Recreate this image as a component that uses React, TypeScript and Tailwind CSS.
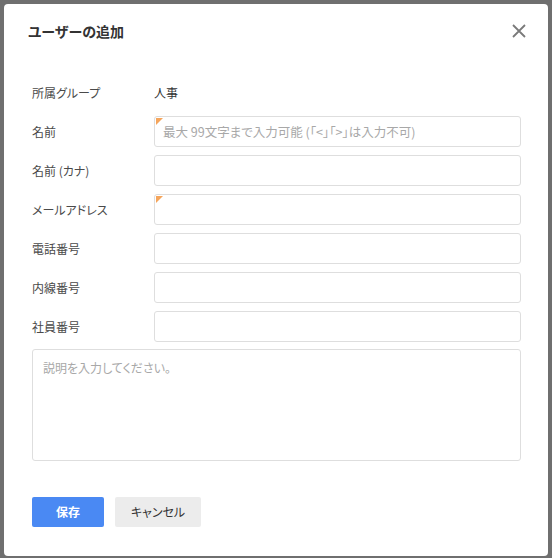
import React from "react";

const jp = "font-['Noto_Sans_CJK_JP','Noto_Sans',sans-serif] [font-feature-settings:'palt']";

function Corner() {
  return (
    <span className="pointer-events-none absolute left-[2px] top-[2px] h-0 w-0 border-l-[7px] border-b-[7px] border-l-[#f5a55c] border-b-transparent" />
  );
}

function Field({ label, placeholder, marked }: { label: string; placeholder?: string; marked?: boolean }) {
  return (
    <div className="flex h-[31px] items-center">
      <div className="w-[122px] shrink-0 text-[12px] text-[#4a4a4a]">{label}</div>
      <div className="relative h-[31px] flex-1">
        <input
          className="h-full w-full rounded-[3px] border border-[#dedede] bg-white px-[8px] text-[12.5px] text-[#333] outline-none placeholder:text-[#a8a8a8]"
          placeholder={placeholder}
        />
        {marked && <Corner />}
      </div>
    </div>
  );
}

export default function App() {
  return (
    <div className={`h-[558px] w-[552px] bg-[#6f6f6f] p-[4px] ${jp}`}>
      <div className="flex h-[552px] w-[544px] flex-col rounded-[4px] bg-white">
        <div className="flex h-[54px] items-center justify-between pl-[24px] pr-[22px]">
          <h1 className="text-[14px] font-bold text-[#333]">ユーザーの追加</h1>
          <svg width="14" height="14" viewBox="0 0 14 14">
            <path d="M1 1 L13 13 M13 1 L1 13" stroke="#7a7a7a" strokeWidth="1.8" />
          </svg>
        </div>

        <div className="mt-[19px] flex flex-col gap-[8px] pl-[28px] pr-[27px]">
          <div className="flex h-[31px] items-center">
            <div className="w-[122px] shrink-0 text-[12px] text-[#4a4a4a]">所属グループ</div>
            <div className="text-[12px] text-[#333]">人事</div>
          </div>
          <Field label="名前" placeholder="最大 99文字まで入力可能 (「<」「>」は入力不可)" marked />
          <Field label="名前 (カナ)" />
          <Field label="メールアドレス" marked />
          <Field label="電話番号" />
          <Field label="内線番号" />
          <Field label="社員番号" />
          <textarea
            className="mt-[-1px] h-[112px] w-full resize-none rounded-[3px] border border-[#dedede] px-[10px] py-[9px] text-[12px] text-[#333] outline-none placeholder:text-[#a8a8a8]"
            placeholder="説明を入力してください。"
          />
        </div>

        <div className="mt-[36px] flex gap-[11px] pl-[28px]">
          <button className="h-[30px] w-[72px] rounded-[2px] bg-[#4a89f3] text-[12px] font-bold text-white">保存</button>
          <button className="h-[30px] w-[86px] rounded-[2px] bg-[#ececec] text-[12px] text-[#333]">キャンセル</button>
        </div>
      </div>
    </div>
  );
}
